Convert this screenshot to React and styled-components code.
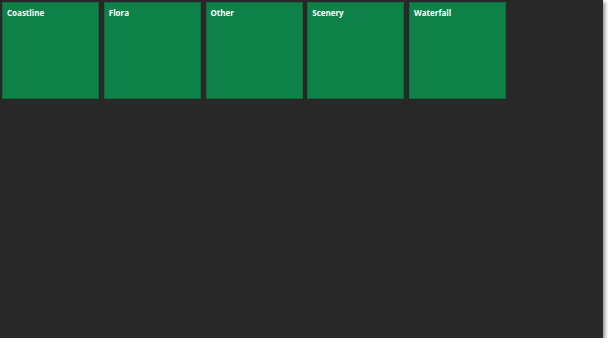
import React from 'react';
import styled, { createGlobalStyle } from 'styled-components';

const GlobalStyle = createGlobalStyle`
  html, body {
    margin: 0;
    padding: 0;
    background: #ffffff;
  }
`;

const Screen = styled.div`
  width: 603px;
  height: 338px;
  background: #282828;
  box-shadow: 2px 2px 4px rgba(0, 0, 0, 0.45);
  padding: 2px;
  box-sizing: border-box;
  font-family: 'Segoe UI', 'Open Sans', 'DejaVu Sans', sans-serif;
`;

const TileRow = styled.div`
  display: flex;
  gap: 4.75px;
`;

const Tile = styled.div`
  width: 97px;
  height: 97px;
  box-sizing: border-box;
  background: #0e8149;
  border: 1px solid #0b6c3c;
  padding: 4px 0 0 4px;
  cursor: pointer;
`;

const TileTitle = styled.div`
  color: #ffffff;
  font-size: 8px;
  font-weight: 700;
  line-height: 12px;
`;

const groups = ['Coastline', 'Flora', 'Other', 'Scenery', 'Waterfall'];

function App() {
  return (
    <>
      <GlobalStyle />
      <Screen>
        <TileRow>
          {groups.map(name => (
            <Tile key={name}>
              <TileTitle>{name}</TileTitle>
            </Tile>
          ))}
        </TileRow>
      </Screen>
    </>
  );
}

export default App;
